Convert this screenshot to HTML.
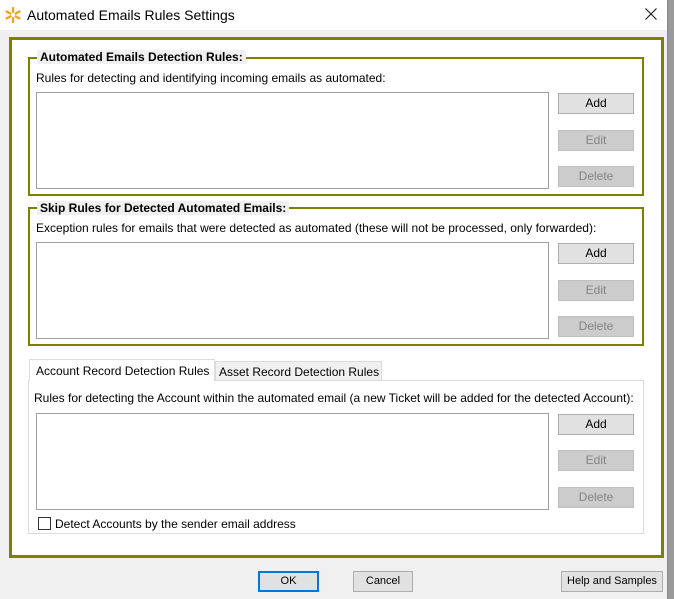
<!DOCTYPE html>
<html><head><style>
*{box-sizing:border-box;margin:0;padding:0}
body{width:674px;height:599px;background:#9a9a9a;font-family:"Liberation Sans",sans-serif;font-size:12px;color:#000;position:relative;overflow:hidden}
.win{position:absolute;left:0;top:0;width:668px;height:599px;background:#f0f0f0;border-right:1px solid #888}
.title{position:absolute;left:0;top:0;width:667px;height:30px;background:#fff}
.title .t{position:absolute;left:27px;top:7px;font-size:14px}
.abs{position:absolute;white-space:nowrap}
.frame{left:9px;top:37px;width:655px;height:521px;border:3px solid #808000;background:#fff}
.grp{border:2px solid #808000;background:#fff}
.lbl{background:#f0f0f0;font-weight:bold;padding:0 3px;font-size:12px}
.list{background:#fff;border:1px solid #a0a0a0}
.btn{width:76px;height:21px;border:1px solid #adadad;background:#e1e1e1;text-align:center;line-height:19px;font-size:12px}
.dis{background:#ccc;border-color:#bfbfbf;color:#838383}
</style></head><body>
<div class="win">
<div class="title">
<svg class="abs" style="left:5px;top:7px" width="16" height="16" viewBox="0 0 16 16"><g stroke="#f0a020" stroke-width="2.2" stroke-linecap="round"><line x1="8" y1="1" x2="8" y2="15"/><line x1="1.5" y1="4.5" x2="14.5" y2="11.5"/><line x1="1.5" y1="11.5" x2="14.5" y2="4.5"/></g><circle cx="8" cy="8" r="2.2" fill="#fff"/></svg>
<div class="t">Automated Emails Rules Settings</div>
<svg class="abs" style="left:645px;top:8px" width="12" height="12" viewBox="0 0 12 12"><path d="M0.5 0.5L11.5 11.5M11.5 0.5L0.5 11.5" stroke="#222" stroke-width="1.2"/></svg>
</div>
<div class="abs frame"></div>

<div class="abs grp" style="left:28px;top:57px;width:616px;height:139px"></div>
<div class="abs lbl" style="left:37px;top:50px">Automated Emails Detection Rules:</div>
<div class="abs" style="left:36px;top:71px">Rules for detecting and identifying incoming emails as automated:</div>
<div class="abs list" style="left:36px;top:92px;width:513px;height:97px"></div>
<div class="abs btn" style="left:558px;top:93px">Add</div>
<div class="abs btn dis" style="left:558px;top:130px">Edit</div>
<div class="abs btn dis" style="left:558px;top:166px">Delete</div>

<div class="abs grp" style="left:28px;top:207px;width:616px;height:139px"></div>
<div class="abs lbl" style="left:37px;top:201px">Skip Rules for Detected Automated Emails:</div>
<div class="abs" style="left:36px;top:221px">Exception rules for emails that were detected as automated (these will not be processed, only forwarded):</div>
<div class="abs list" style="left:36px;top:242px;width:513px;height:97px"></div>
<div class="abs btn" style="left:558px;top:243px">Add</div>
<div class="abs btn dis" style="left:558px;top:280px">Edit</div>
<div class="abs btn dis" style="left:558px;top:316px">Delete</div>

<div class="abs" style="left:28px;top:380px;width:616px;height:154px;border:1px solid #dcdcdc;background:#fff"></div>
<div class="abs" style="left:215px;top:361px;width:167px;height:20px;border:1px solid #dcdcdc;background:#f0f0f0;padding:3px 0 0 3px;font-size:12px">Asset Record Detection Rules</div>
<div class="abs" style="left:29px;top:359px;width:186px;height:22px;border:1px solid #dcdcdc;border-bottom:none;background:#fff;padding:4px 0 0 6px;font-size:12px">Account Record Detection Rules</div>
<div class="abs" style="left:34px;top:391px">Rules for detecting the Account within the automated email (a new Ticket will be added for the detected Account):</div>
<div class="abs list" style="left:36px;top:413px;width:513px;height:97px"></div>
<div class="abs btn" style="left:558px;top:414px">Add</div>
<div class="abs btn dis" style="left:558px;top:450px">Edit</div>
<div class="abs btn dis" style="left:558px;top:487px">Delete</div>
<div class="abs" style="left:38px;top:517px;width:13px;height:13px;border:1px solid #333;background:#fff"></div>
<div class="abs" style="left:55px;top:517px">Detect Accounts by the sender email address</div>

<div class="abs btn" style="left:258px;top:571px;width:61px;border:2px solid #0078d7;line-height:17px;font-size:11px">OK</div>
<div class="abs btn" style="left:353px;top:571px;width:60px;font-size:11px">Cancel</div>
<div class="abs btn" style="left:561px;top:571px;width:102px;font-size:11px">Help and Samples</div>
</div>
</body></html>
